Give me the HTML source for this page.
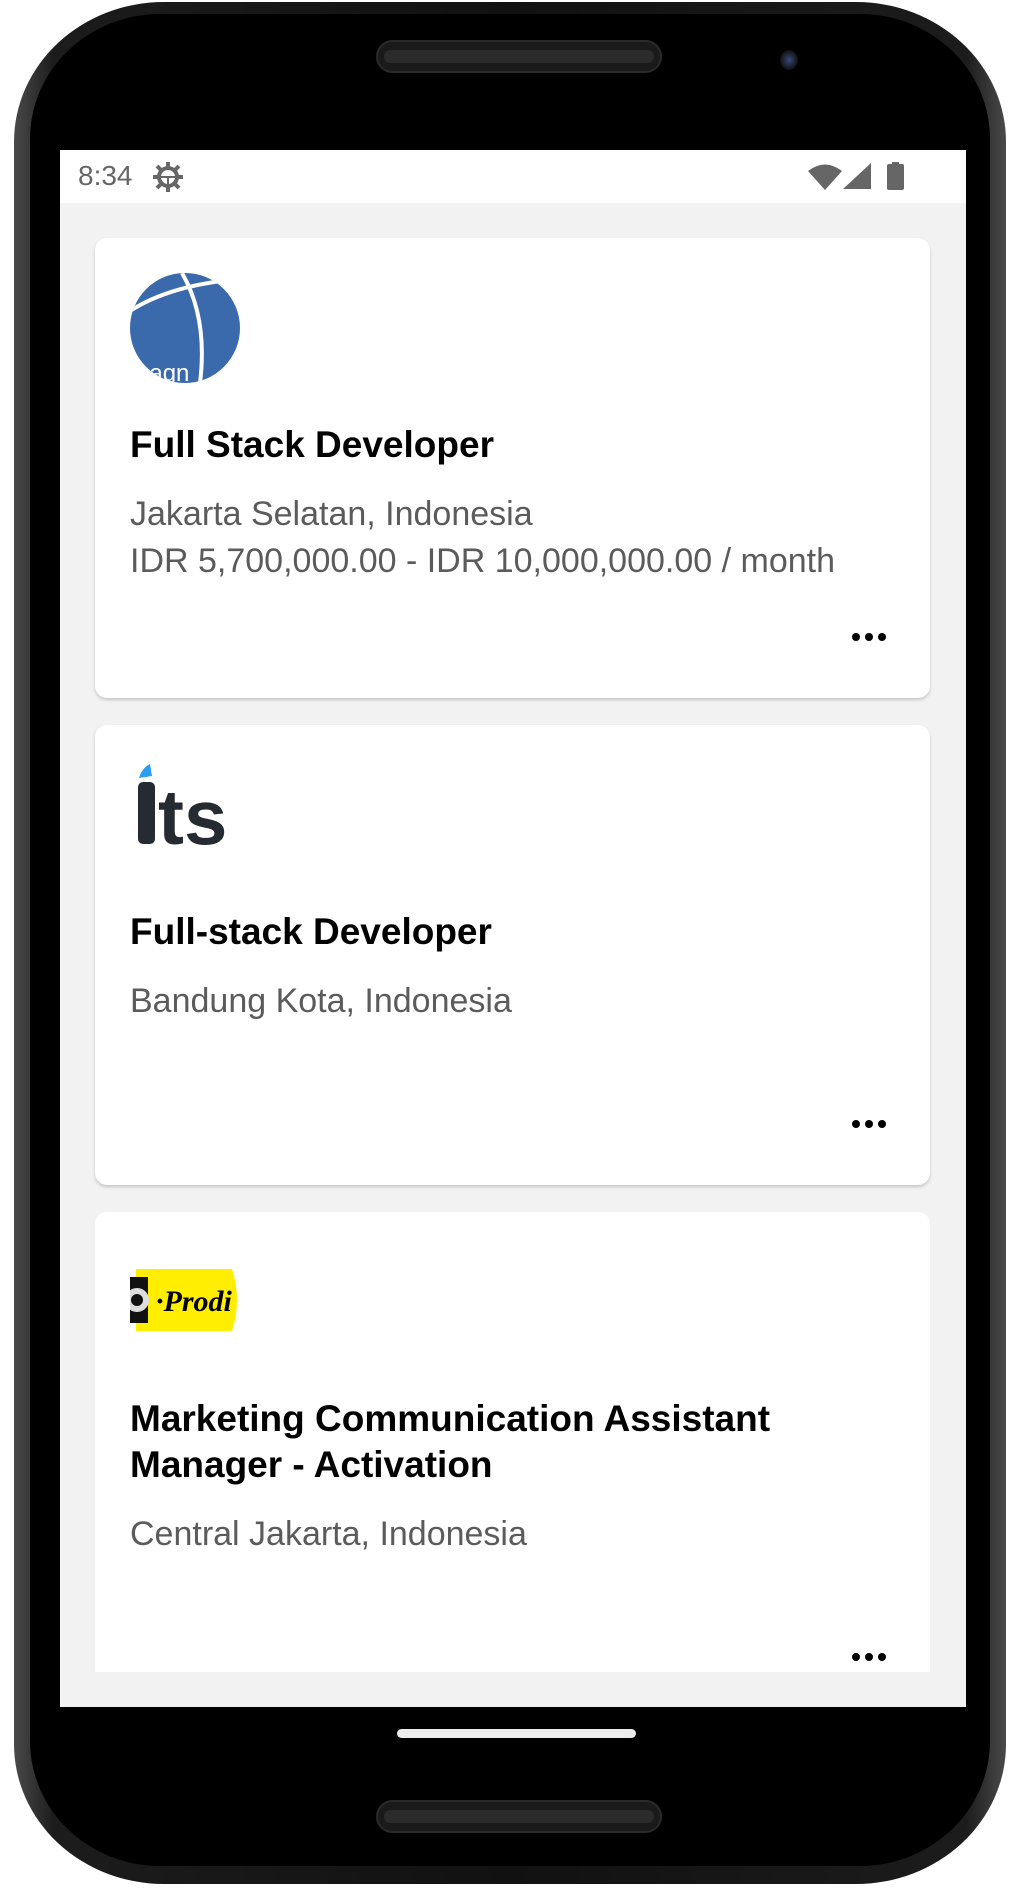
<!DOCTYPE html>
<html><head><meta charset="utf-8"><style>
*{margin:0;padding:0;box-sizing:border-box}
body{width:1018px;height:1899px;background:#fff;position:relative;overflow:hidden;font-family:"Liberation Sans",Roboto,sans-serif}
.abs{position:absolute}
.phone{left:14px;top:2px;width:992px;height:1882px;border-radius:150px/140px;background:linear-gradient(90deg,#4a4a4a,#1c1c1c 4%,#111 50%,#1c1c1c 96%,#4a4a4a);}
.bezel{left:30px;top:14px;width:960px;height:1852px;border-radius:130px/125px;background:#000}
.speaker{left:376px;width:286px;height:33px;border-radius:17px;background:#1a1a1a;border:2px solid #2a2a2a}
.speaker::after{content:"";position:absolute;left:6px;right:6px;top:8px;height:13px;border-radius:7px;background:#2b2b2b}
.screen{left:60px;top:150px;width:906px;height:1557px;background:#f2f2f2;overflow:hidden}
.status{left:0;top:0;width:906px;height:53px;background:#fff}
.card{left:35px;width:835px;background:#fff;border-radius:12px;box-shadow:0 2px 3px rgba(0,0,0,.18)}
.title{position:absolute;left:35px;font-weight:bold;font-size:37px;color:#000;line-height:46px}
.sub{position:absolute;left:35px;font-size:34px;color:#5b5b5b;line-height:47px}
.dots{position:absolute;left:757px;width:40px;height:8px}
.dots i{position:absolute;top:0;width:8px;height:8px;border-radius:50%;background:#000}
</style></head><body>
<div class="abs phone"></div>
<div class="abs bezel"></div>
<div class="abs speaker" style="top:40px"></div>
<div class="abs" style="left:780px;top:50px;width:18px;height:20px;border-radius:50%;background:radial-gradient(#3a4a7a,#111 70%)"></div>
<div class="abs speaker" style="top:1800px"></div>
<div class="abs" style="left:60px;top:1707px;width:906px;height:52px;background:#000"></div>
<div class="abs" style="left:397px;top:1729px;width:239px;height:9px;border-radius:5px;background:#ececec"></div>

<div class="abs screen">
 <div class="abs status">
  <div class="abs" style="left:18px;top:10px;font-size:28px;color:#666">8:34</div>
  <svg class="abs" style="left:92px;top:11px" width="32" height="32" viewBox="0 0 32 32"><g fill="#666"><circle cx="16" cy="16" r="11"/><g stroke="#666" stroke-width="4"><line x1="16" y1="1" x2="16" y2="31"/><line x1="1" y1="16" x2="31" y2="16"/><line x1="5" y1="5" x2="27" y2="27"/><line x1="27" y1="5" x2="5" y2="27"/></g></g><circle cx="16" cy="16" r="7" fill="#fff"/><rect x="9" y="15" width="14" height="2" fill="#666"/><rect x="15" y="16" width="2" height="7" fill="#666"/></svg>
  <svg class="abs" style="left:748px;top:13px" width="34" height="27" viewBox="0 0 34 27"><path d="M0 8 Q17 -5 34 8 L17 27Z" fill="#666"/></svg>
  <svg class="abs" style="left:783px;top:13px" width="28" height="26" viewBox="0 0 28 26"><path d="M28 0V26H0Z" fill="#666"/></svg>
  <svg class="abs" style="left:827px;top:12px" width="17" height="28" viewBox="0 0 17 28"><rect x="5" y="0" width="7" height="3" fill="#666"/><rect x="0" y="2" width="17" height="26" rx="2" fill="#666"/></svg>
 </div>

 <div class="abs card" style="top:88px;height:460px">
  <svg class="abs" style="left:35px;top:35px" width="110" height="110" viewBox="0 0 110 110"><defs><clipPath id="c1"><circle cx="55" cy="55" r="55"/></clipPath></defs><g clip-path="url(#c1)"><rect width="110" height="110" fill="#3a6aab"/><path d="M0 38 Q40 12 110 6" stroke="#fff" stroke-width="4" fill="none"/><path d="M52 0 Q78 45 70 110" stroke="#fff" stroke-width="4" fill="none"/><text x="6" y="108" font-size="24" fill="#fff" font-family="Liberation Sans">nagn</text></g></svg>
  <div class="title" style="top:184px">Full Stack Developer</div>
  <div class="sub" style="top:253px">Jakarta Selatan, Indonesia</div>
  <div class="sub" style="top:300px">IDR 5,700,000.00 - IDR 10,000,000.00 / month</div>
  <div class="dots" style="top:395px"><i style="left:0"></i><i style="left:13px"></i><i style="left:26px"></i></div>
 </div>

 <div class="abs card" style="top:575px;height:460px">
  <svg class="abs" style="left:35px;top:35px" width="110" height="90" viewBox="0 0 110 90"><rect x="8" y="22" width="17" height="62" rx="5" fill="#262a31"/><path d="M9 18 Q12 8 20 4 L22 16Z" fill="#2a9df4"/><text x="28" y="84" font-size="78" font-weight="bold" fill="#262a31" font-family="Liberation Sans">ts</text></svg>
  <div class="title" style="top:184px">Full-stack Developer</div>
  <div class="sub" style="top:253px">Bandung Kota, Indonesia</div>
  <div class="dots" style="top:395px"><i style="left:0"></i><i style="left:13px"></i><i style="left:26px"></i></div>
 </div>

 <div class="abs card" style="top:1062px;height:460px;border-radius:12px 12px 0 0;box-shadow:none">
  <svg class="abs" style="left:35px;top:57px" width="110" height="62" viewBox="0 0 110 62"><path d="M6 0H102 Q112 31 102 62H6Z" fill="#ffee00"/><rect x="0" y="8" width="18" height="46" fill="#111"/><circle cx="7" cy="31" r="12" fill="#ddd"/><circle cx="7" cy="31" r="6" fill="#111"/><text x="26" y="42" font-size="30" font-style="italic" font-weight="bold" fill="#000" font-family="Liberation Serif">·Prodi</text></svg>
  <div class="title" style="top:184px">Marketing Communication Assistant<br>Manager - Activation</div>
  <div class="sub" style="top:299px">Central Jakarta, Indonesia</div>
  <div class="dots" style="top:441px"><i style="left:0"></i><i style="left:13px"></i><i style="left:26px"></i></div>
 </div>
</div>
</body></html>
